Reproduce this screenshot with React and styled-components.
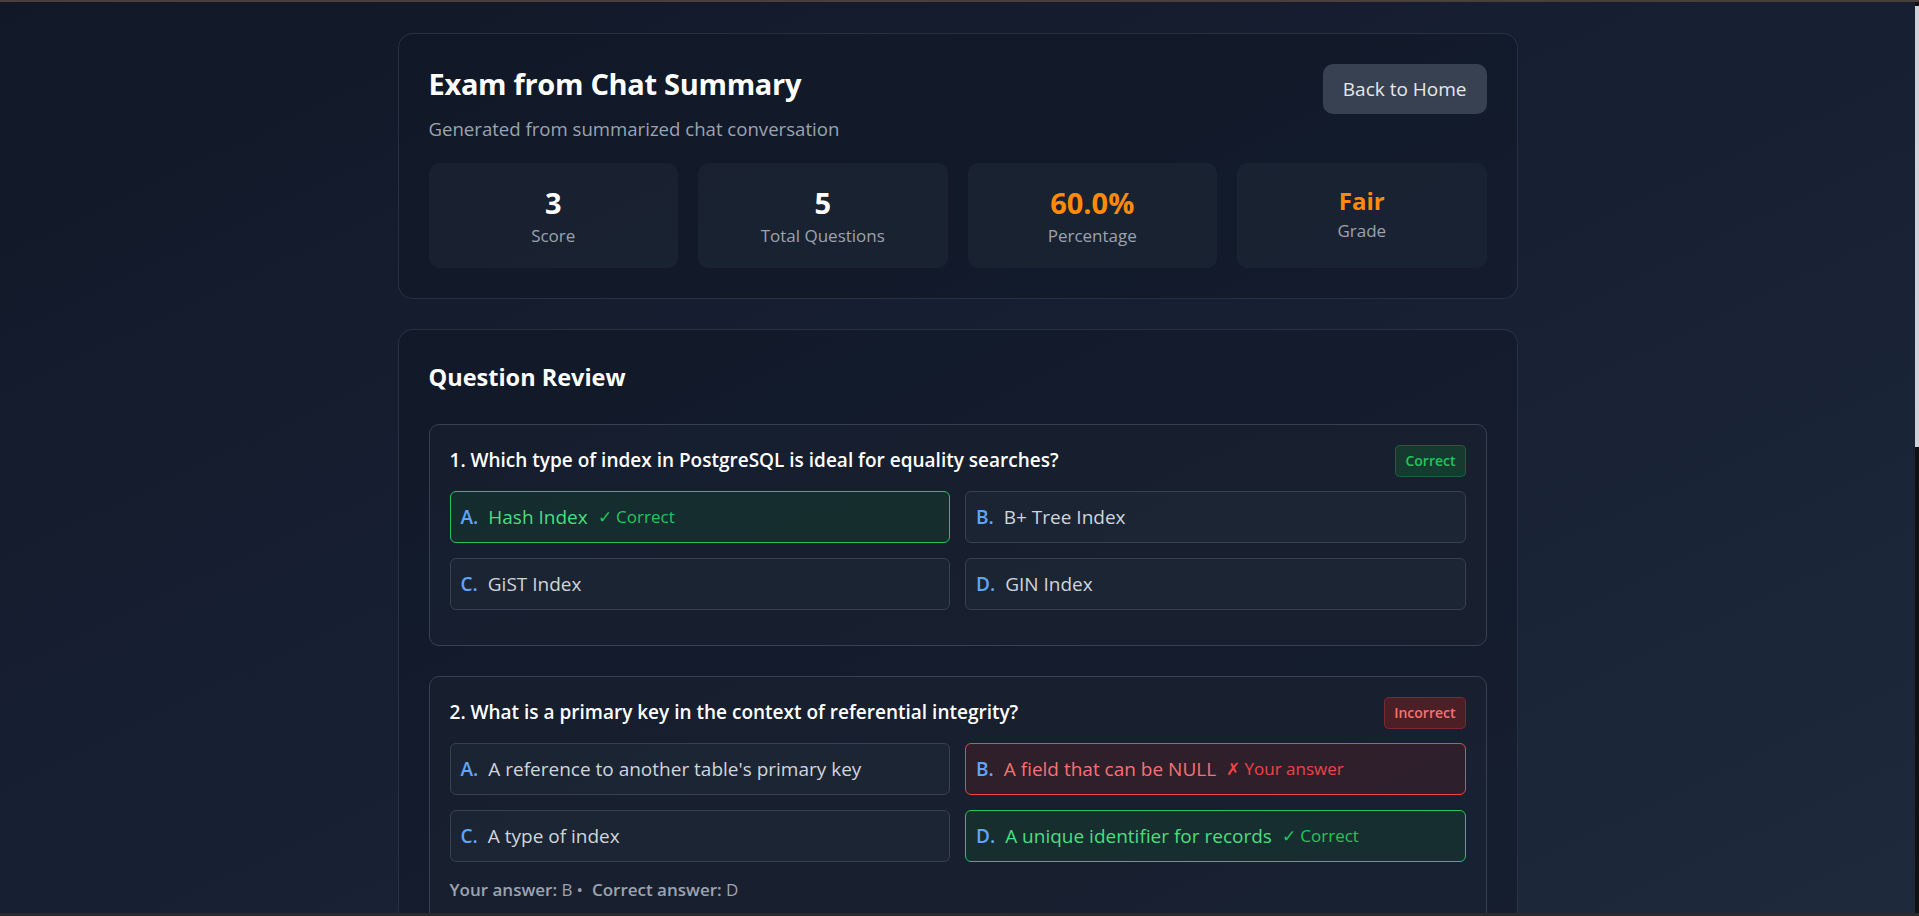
import React from 'react';
import styled, { createGlobalStyle } from 'styled-components';

const GlobalStyle = createGlobalStyle`
    html, body {
        margin: 0;
        padding: 0;
        background: #111827;
        scrollbar-width: none;
    }
    html::-webkit-scrollbar {
        display: none;
    }
    body {
        font-family: "Open Sans", "Noto Sans", sans-serif;
        color: #e5e7eb;
    }
    * {
        box-sizing: border-box;
    }
`;

const Page = styled.div`
    min-height: 100vh;
    padding: 33px 24px 40px 20px;
    background: linear-gradient(to bottom right, #111827 0%, #172033 50%, #1e293b 100%);
    background-attachment: fixed;
`;

const TopEdge = styled.div`
    position: fixed;
    top: 0;
    left: 0;
    right: 0;
    height: 2px;
    background: #4b3e3e;
    z-index: 10;
`;

const BottomEdge = styled.div`
    position: fixed;
    bottom: 0;
    left: 0;
    right: 0;
    height: 3px;
    background: #2a2a2b;
    z-index: 10;
`;

const ScrollTrack = styled.div`
    position: fixed;
    top: 2px;
    right: 0;
    bottom: 3px;
    width: 4px;
    background: #111111;
    z-index: 9;
`;

const ScrollThumb = styled.div`
    margin-top: 4px;
    height: 441px;
    background: #cfd2d9;
`;

const Container = styled.div`
    max-width: 1120px;
    margin: 0 auto;
`;

const Card = styled.section`
    background: rgba(17, 24, 39, 0.55);
    border: 1px solid rgba(55, 65, 81, 0.6);
    border-radius: 15px;
    padding: 30px;
    margin-bottom: ${props => props.gap || '0'};
`;

const HeaderRow = styled.div`
    display: flex;
    justify-content: space-between;
    align-items: flex-start;
`;

const Title = styled.h1`
    margin: 0;
    font-size: 29px;
    line-height: 40px;
    font-weight: 700;
    color: #ffffff;
    letter-spacing: -0.3px;
`;

const Subtitle = styled.p`
    margin: 10px 0 0;
    font-size: 18.6px;
    line-height: 30px;
    color: #9ca3af;
`;

const BackButton = styled.button`
    font-family: inherit;
    font-size: 19px;
    line-height: 30px;
    padding: 10px 20px;
    background: #374151;
    color: #e5e7eb;
    border: none;
    border-radius: 10px;
    cursor: pointer;
`;

const StatsGrid = styled.div`
    display: grid;
    grid-template-columns: repeat(4, 1fr);
    gap: 20px;
    margin-top: 19px;
`;

const Stat = styled.div`
    background: rgba(31, 41, 55, 0.5);
    border-radius: 10px;
    padding: 20px;
    text-align: center;
`;

const StatValue = styled.div`
    font-size: ${props => props.size}px;
    line-height: ${props => props.lh}px;
    font-weight: 700;
    color: ${props => props.color || '#ffffff'};
`;

const StatLabel = styled.div`
    font-size: 17px;
    line-height: 25px;
    color: #9ca3af;
`;

const SectionTitle = styled.h2`
    margin: 0 0 29px;
    font-size: 23.5px;
    line-height: 35px;
    font-weight: 700;
    color: #ffffff;
`;

const QuestionList = styled.div`
    display: flex;
    flex-direction: column;
    gap: 30px;
`;

const QuestionBox = styled.div`
    border: 1px solid #374151;
    border-radius: 10px;
    padding: 20px;
    background: rgba(31, 41, 55, 0.35);
`;

const QuestionHead = styled.div`
    display: flex;
    justify-content: space-between;
    align-items: flex-start;
    gap: 15px;
    margin-bottom: 14px;
`;

const QuestionText = styled.h3`
    margin: 0;
    font-size: 19px;
    line-height: 30px;
    font-weight: 600;
    color: #ffffff;
`;

const Badge = styled.span`
    flex-shrink: 0;
    font-size: 14px;
    line-height: 20px;
    font-weight: 600;
    padding: 5px 9px;
    border-radius: 5px;
    border: 1px solid ${props => (props.ok ? 'rgba(34, 197, 94, 0.3)' : 'rgba(239, 68, 68, 0.3)')};
    background: ${props => (props.ok ? 'rgba(20, 83, 45, 0.5)' : 'rgba(127, 29, 29, 0.5)')};
    color: ${props => (props.ok ? '#22c55e' : '#f87171')};
`;

const OptionsGrid = styled.div`
    display: grid;
    grid-template-columns: 1fr 1fr;
    gap: 15px;
`;

const optionTheme = {
    correct: { border: '#22c55e', bg: 'rgba(20, 83, 45, 0.28)', text: '#4ade80', mark: '#22c55e' },
    wrong: { border: '#ef4444', bg: 'rgba(127, 29, 29, 0.22)', text: '#f87171', mark: '#ef4444' },
    plain: { border: '#374151', bg: 'rgba(31, 41, 55, 0.5)', text: '#d1d5db', mark: '#d1d5db' },
};

const Option = styled.div`
    display: flex;
    align-items: center;
    padding: 10px;
    border-radius: 6px;
    border: 1px solid ${props => optionTheme[props.state].border};
    background: ${props => optionTheme[props.state].bg};
    color: ${props => optionTheme[props.state].text};
    font-size: 19px;
    line-height: 30px;
`;

const Letter = styled.span`
    font-weight: 600;
    color: #60a5fa;
    margin-right: 10px;
`;

const Mark = styled.span`
    margin-left: 10px;
    font-size: 17px;
    color: ${props => optionTheme[props.state].mark};
`;

const AnswerLine = styled.div`
    margin-top: 15px;
    font-size: 17px;
    line-height: 25px;
    color: #9ca3af;
    min-height: ${props => (props.empty ? '0' : '25px')};
`;

const AnswerKey = styled.span`
    font-weight: 600;
`;

const Sep = styled.span`
    margin: 0 9px 0 4px;
`;

const questions = [
    {
        text: 'Which type of index in PostgreSQL is ideal for equality searches?',
        options: ['Hash Index', 'B+ Tree Index', 'GiST Index', 'GIN Index'],
        answer: 0,
        picked: 0,
    },
    {
        text: 'What is a primary key in the context of referential integrity?',
        options: [
            "A reference to another table's primary key",
            'A field that can be NULL',
            'A type of index',
            'A unique identifier for records',
        ],
        answer: 3,
        picked: 1,
    },
    {
        text: 'Which SQL clause is used to filter grouped results?',
        options: ['WHERE', 'HAVING', 'ORDER BY', 'LIMIT'],
        answer: 1,
        picked: 1,
    },
    {
        text: 'What does normalization primarily aim to reduce?',
        options: ['Query speed', 'Data redundancy', 'Number of tables', 'Index size'],
        answer: 1,
        picked: 2,
    },
    {
        text: 'Which isolation level prevents dirty reads but allows non-repeatable reads?',
        options: ['Read Uncommitted', 'Read Committed', 'Repeatable Read', 'Serializable'],
        answer: 1,
        picked: 1,
    },
];

const letters = ['A', 'B', 'C', 'D'];

function Question({ q, index }) {
    const ok = q.picked === q.answer;
    return (
        <QuestionBox>
            <QuestionHead>
                <QuestionText>{index + 1}. {q.text}</QuestionText>
                <Badge ok={ok}>{ok ? 'Correct' : 'Incorrect'}</Badge>
            </QuestionHead>
            <OptionsGrid>
                {q.options.map((opt, i) => {
                    let state = 'plain';
                    if (i === q.answer) state = 'correct';
                    else if (i === q.picked) state = 'wrong';
                    return (
                        <Option key={i} state={state}>
                            <Letter>{letters[i]}.</Letter>
                            {opt}
                            {state === 'correct' && <Mark state={state}>✓ Correct</Mark>}
                            {state === 'wrong' && <Mark state={state}>✗ Your answer</Mark>}
                        </Option>
                    );
                })}
            </OptionsGrid>
            {ok ? (
                <AnswerLine empty />
            ) : (
                <AnswerLine>
                    <AnswerKey>Your answer:</AnswerKey> {letters[q.picked]}
                    <Sep>•</Sep>
                    <AnswerKey>Correct answer:</AnswerKey> {letters[q.answer]}
                </AnswerLine>
            )}
        </QuestionBox>
    );
}

export default function App() {
    return (
        <>
            <GlobalStyle />
            <TopEdge />
            <Page>
                <Container>
                    <Card gap="30px">
                        <HeaderRow>
                            <div>
                                <Title>Exam from Chat Summary</Title>
                                <Subtitle>Generated from summarized chat conversation</Subtitle>
                            </div>
                            <BackButton>Back to Home</BackButton>
                        </HeaderRow>
                        <StatsGrid>
                            <Stat>
                                <StatValue size={29} lh={40}>3</StatValue>
                                <StatLabel>Score</StatLabel>
                            </Stat>
                            <Stat>
                                <StatValue size={29} lh={40}>5</StatValue>
                                <StatLabel>Total Questions</StatLabel>
                            </Stat>
                            <Stat>
                                <StatValue size={29} lh={40} color="#ff8a0a">60.0%</StatValue>
                                <StatLabel>Percentage</StatLabel>
                            </Stat>
                            <Stat>
                                <StatValue size={24} lh={35} color="#ff8a0a">Fair</StatValue>
                                <StatLabel>Grade</StatLabel>
                            </Stat>
                        </StatsGrid>
                    </Card>
                    <Card>
                        <SectionTitle>Question Review</SectionTitle>
                        <QuestionList>
                            {questions.map((q, i) => (
                                <Question key={i} q={q} index={i} />
                            ))}
                        </QuestionList>
                    </Card>
                </Container>
            </Page>
            <ScrollTrack>
                <ScrollThumb />
            </ScrollTrack>
            <BottomEdge />
        </>
    );
}
